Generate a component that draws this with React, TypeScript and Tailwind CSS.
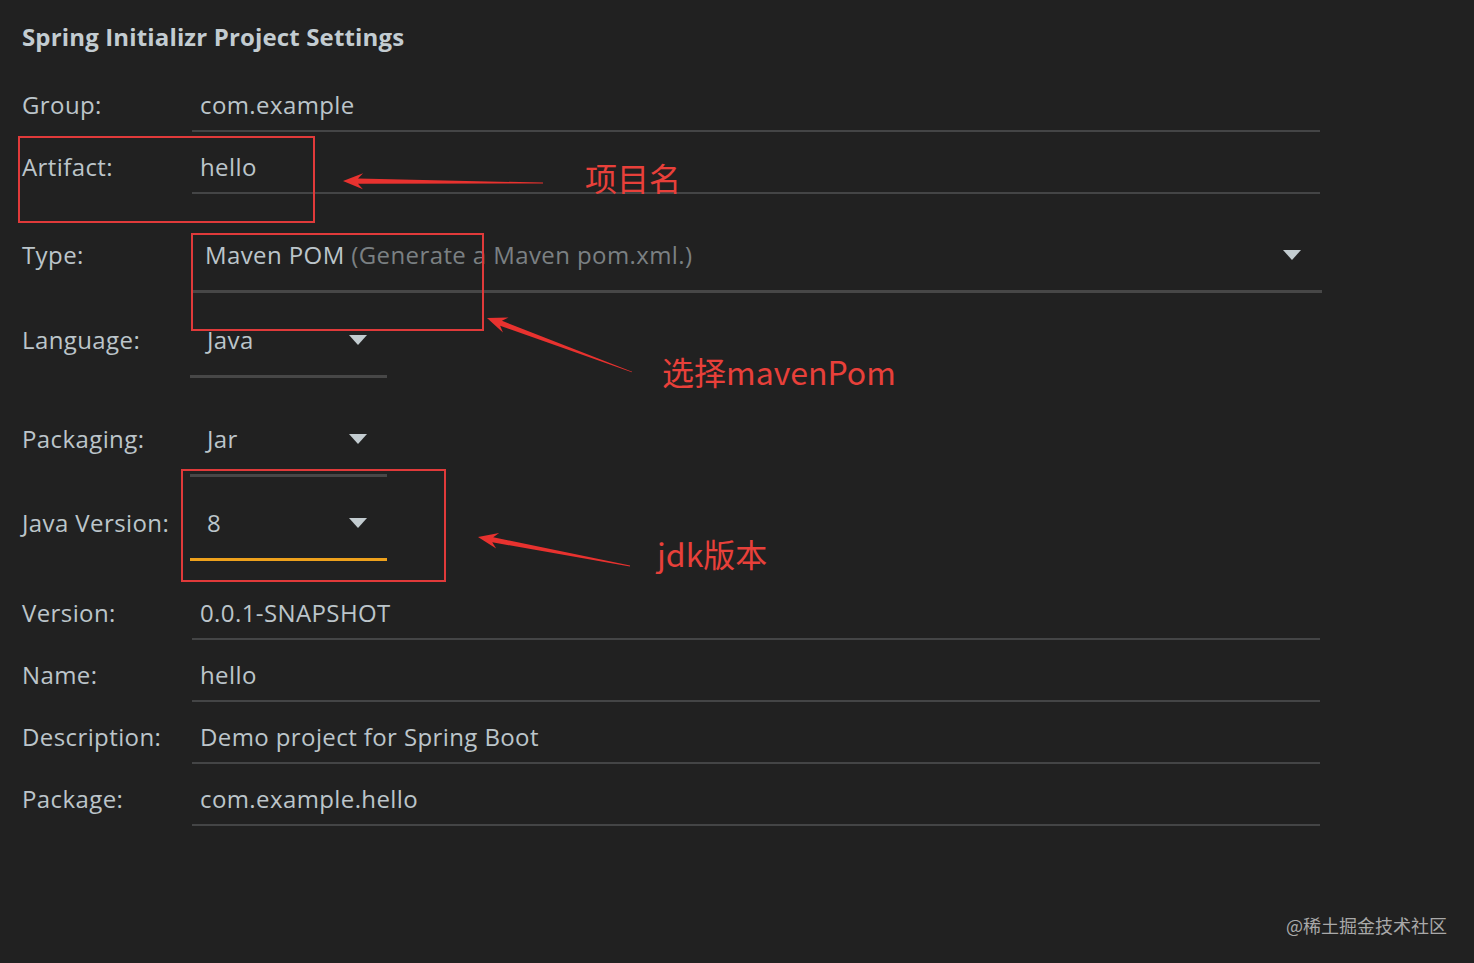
import React from "react";

const TEXT_FONT = "font-['Open_Sans','Noto_Sans',sans-serif]";
const CJK_FONT = "font-['Noto_Sans_CJK_SC','Noto_Sans',sans-serif]";

function Caret() {
  return (
    <svg width="18" height="10" viewBox="0 0 18 10" className="shrink-0">
      <polygon points="0,0 18,0 9,10" fill="#c3ccd0" />
    </svg>
  );
}

function TextRow({ label, value, mt }: { label: string; value: string; mt: string }) {
  return (
    <div className={`flex ${mt}`}>
      <div className="flex h-[50px] w-[170px] items-center">{label}</div>
      <div className="flex h-[52px] w-[1128px] items-center border-b-2 border-[#444546] pl-[8px]">
        {value}
      </div>
    </div>
  );
}

function SelectRow({
  label,
  children,
  mt,
  wide,
  accent,
}: {
  label: string;
  children: React.ReactNode;
  mt: string;
  wide?: boolean;
  accent?: boolean;
}) {
  return (
    <div className={`flex ${mt}`}>
      <div className="flex h-[70px] w-[168px] items-center whitespace-nowrap">{label}</div>
      <div
        className={`flex h-[73px] items-center justify-between border-b-[3px] ${
          wide ? "ml-[2px] w-[1130px] pl-[13px] pr-[21px]" : "w-[197px] pl-[17px] pr-[20px]"
        } ${accent ? "border-[#eea11c]" : "border-[#474747]"}`}
      >
        <span className="whitespace-nowrap">{children}</span>
        <Caret />
      </div>
    </div>
  );
}

type Pt = [number, number];

function arrowPoints(tip: Pt, tail: Pt) {
  const dx = tail[0] - tip[0];
  const dy = tail[1] - tip[1];
  const len = Math.hypot(dx, dy);
  const ux = dx / len;
  const uy = dy / len;
  const nx = -uy;
  const ny = ux;
  const headLen = 20;
  const headW = 8;
  const shaftW = 2.6;
  const p = (a: number, b: number): string =>
    `${tip[0] + ux * a + nx * b},${tip[1] + uy * a + ny * b}`;
  return [
    p(0, 0),
    p(headLen, headW),
    p(headLen - 5, shaftW),
    p(len, 0.4),
    p(len, -0.4),
    p(headLen - 5, -shaftW),
    p(headLen, -headW),
  ].join(" ");
}

const ARROWS: { tip: Pt; tail: Pt }[] = [
  { tip: [343, 181], tail: [543, 183] },
  { tip: [487, 318], tail: [632, 372] },
  { tip: [478, 537], tail: [630, 566] },
];

const BOXES = [
  "left-[18px] top-[136px] w-[297px] h-[87px]",
  "left-[191px] top-[233px] w-[293px] h-[98px]",
  "left-[181px] top-[469px] w-[265px] h-[113px]",
];

export default function App() {
  return (
    <div className={`relative h-[963px] w-full overflow-hidden bg-[#212121] text-[24px] tracking-[0.4px] text-[#bcc5ca] ${TEXT_FONT}`}>
      {/* Settings form */}
      <div className="pl-[22px] pt-[21px]">
        <h1 className="text-[24px] font-bold leading-[32px] tracking-[0.15px] text-[#c3ccd1]">
          Spring Initializr Project Settings
        </h1>

        <TextRow label="Group:" value="com.example" mt="mt-[27px]" />
        <TextRow label="Artifact:" value="hello" mt="mt-[10px]" />

        <SelectRow label="Type:" mt="mt-[26px]" wide>
          Maven POM <span className="text-[#7b8083]">(Generate a Maven pom.xml.)</span>
        </SelectRow>
        <SelectRow label="Language:" mt="mt-[12px]">Java</SelectRow>
        <SelectRow label="Packaging:" mt="mt-[26px]">Jar</SelectRow>
        <SelectRow label="Java Version:" mt="mt-[11px]" accent>8</SelectRow>

        <TextRow label="Version:" value="0.0.1-SNAPSHOT" mt="mt-[27px]" />
        <TextRow label="Name:" value="hello" mt="mt-[10px]" />
        <TextRow label="Description:" value="Demo project for Spring Boot" mt="mt-[10px]" />
        <TextRow label="Package:" value="com.example.hello" mt="mt-[10px]" />
      </div>

      {/* Annotation boxes */}
      {BOXES.map((b) => (
        <div key={b} className={`pointer-events-none absolute border-2 border-[#e03a3a] ${b}`} />
      ))}

      {/* Annotation arrows */}
      <svg className="pointer-events-none absolute left-0 top-0" width="1474" height="963">
        {ARROWS.map((a, i) => (
          <polygon key={i} points={arrowPoints(a.tip, a.tail)} fill="#e8322f" />
        ))}
      </svg>

      {/* Annotation labels */}
      <span className={`absolute left-[585px] top-[157px] text-[32px] leading-[40px] tracking-normal text-[#e8403a] ${CJK_FONT}`}>
        项目名
      </span>
      <span className={`absolute left-[662px] top-[351px] text-[32px] leading-[40px] tracking-normal text-[#e8403a] ${CJK_FONT}`}>
        选择mavenPom
      </span>
      <span className={`absolute left-[657px] top-[533px] text-[32px] leading-[40px] tracking-normal text-[#e8403a] ${CJK_FONT}`}>
        jdk版本
      </span>

      {/* Watermark */}
      <span className={`absolute left-[1286px] top-[913px] text-[18px] leading-[24px] tracking-normal text-[#a9a9a9] ${CJK_FONT}`}>
        @稀土掘金技术社区
      </span>
    </div>
  );
}
